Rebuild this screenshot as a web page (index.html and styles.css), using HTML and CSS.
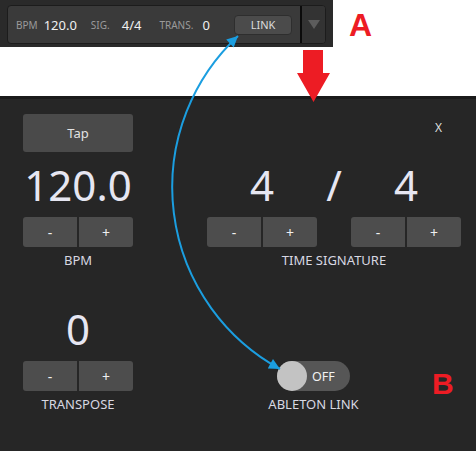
FILE: index.html
```html
<!DOCTYPE html>
<html lang="en">
<head>
    <meta charset="UTF-8">
    <meta name="viewport" content="width=device-width, initial-scale=1.0">
    <title>Ableton Link settings</title>
    <link rel="stylesheet" href="styles.css">
</head>
<body>
    <div class="top">
        <div class="transport">
            <div class="transport-inner">
                <div class="transport-main">
                    <span class="tb-label">BPM</span>
                    <span class="tb-value">120.0</span>
                    <span class="tb-label gap-sig">SIG.</span>
                    <span class="tb-value v-sig">4/4</span>
                    <span class="tb-label gap-trans">TRANS.</span>
                    <span class="tb-value v-trans">0</span>
                    <button class="link-btn">LINK</button>
                </div>
                <div class="transport-drop"><span class="drop-tri"></span></div>
            </div>
        </div>

        <span class="callout callout-a">A</span>

        <svg class="down-arrow" width="33" height="52" viewBox="0 0 33 52">
            <polygon points="6,0 26,0 26,23 33,23 16.5,52 0,23 6,23" fill="#ed1c24"/>
        </svg>
    </div>

    <section class="panel">
        <div class="row row-top">
            <button class="tap">Tap</button>
            <div class="close">X</div>
        </div>

        <div class="row">
            <div class="control">
                <div class="value">120.0</div>
                <div class="steppers">
                    <button>-</button>
                    <button>+</button>
                </div>
                <div class="label">BPM</div>
            </div>

            <div class="timesig">
                <div class="sig-values">
                    <div class="sig-part">
                        <div class="value">4</div>
                        <div class="steppers">
                            <button>-</button>
                            <button>+</button>
                        </div>
                    </div>
                    <div class="value sig-slash">/</div>
                    <div class="sig-part">
                        <div class="value">4</div>
                        <div class="steppers">
                            <button>-</button>
                            <button>+</button>
                        </div>
                    </div>
                </div>
                <div class="label">TIME SIGNATURE</div>
            </div>
        </div>

        <div class="row row-bottom">
            <div class="control">
                <div class="value">0</div>
                <div class="steppers">
                    <button>-</button>
                    <button>+</button>
                </div>
                <div class="label">TRANSPOSE</div>
            </div>

            <div class="link-control">
                <div class="toggle">
                    <span class="knob"></span>
                    <span class="toggle-text">OFF</span>
                </div>
                <div class="label">ABLETON LINK</div>
            </div>
        </div>

        <span class="callout callout-b">B</span>
    </section>

    <!-- annotation: LINK button maps to the Ableton Link toggle -->
    <svg class="link-arrow" width="476" height="451" viewBox="0 0 476 451">
        <defs>
            <marker id="head" viewBox="0 0 10 10" refX="10" refY="5" markerUnits="userSpaceOnUse"
                    markerWidth="15" markerHeight="11" orient="auto-start-reverse">
                <path d="M0,0 L10,5 L0,10 z" fill="#1b9ee0"/>
            </marker>
        </defs>
        <path d="M 238 36 A 207 207 0 0 0 280 369" fill="none" stroke="#1b9ee0" stroke-width="2"
              marker-start="url(#head)" marker-end="url(#head)"/>
    </svg>
</body>
</html>
```

FILE: styles.css
```css
:root {
    --panel-bg: #262626;
    --button-bg: #4d4d4d;
    --value-color: #e6e6f2;
    --label-color: #d8d8e2;
    --callout-red: #ed1c24;
}

body {
    margin: 0;
    padding: 0;
    width: 476px;
    height: 451px;
    overflow: hidden;
    position: relative;
    background-color: white;
    font-family: 'Noto Sans', 'DejaVu Sans', sans-serif;
}

button {
    font-family: inherit;
    border: none;
    padding: 0;
    cursor: pointer;
}

/* top transport bar */

.top {
    height: 96px;
    position: relative;
}

.transport {
    width: 333px;
    height: 47px;
    box-sizing: border-box;
    padding: 5px 7px 3px 7px;
    background-color: #2a2a2a;
}

.transport-inner {
    display: flex;
    height: 39px;
    box-sizing: border-box;
    border: 1px solid #1c1c1c;
    border-radius: 4px;
    background-color: #3a3a3a;
    overflow: hidden;
}

.transport-main {
    flex: 1;
    display: flex;
    align-items: center;
    padding-left: 8px;
    padding-right: 8px;
}

.tb-label {
    font-size: 10px;
    color: #9a9a9a;
}

.tb-value {
    font-size: 13px;
    color: #f0f0f0;
    margin-left: 6px;
}

.gap-sig {
    margin-left: 14px;
}

.v-sig {
    margin-left: 12px;
}

.gap-trans {
    margin-left: 18px;
}

.v-trans {
    margin-left: 9px;
}

.link-btn {
    margin-left: auto;
    width: 58px;
    height: 20px;
    border-radius: 4px;
    border: 1px solid #2e2e2e;
    background-color: #4b4b4b;
    color: #dcdcdc;
    font-size: 11px;
}

.transport-drop {
    width: 23px;
    border-left: 2px solid #0b0b0b;
    background-color: #333333;
    display: flex;
    align-items: center;
    justify-content: center;
}

.drop-tri {
    width: 0;
    height: 0;
    border-left: 6.5px solid transparent;
    border-right: 6.5px solid transparent;
    border-top: 9px solid #5c5c5c;
}

.callout {
    position: absolute;
    font-family: 'Liberation Sans', Arial, sans-serif;
    font-weight: bold;
    color: var(--callout-red);
    line-height: 1;
}

.callout-a {
    left: 349px;
    top: 9px;
    font-size: 32px;
}

.callout-b {
    left: 432px;
    top: 270px;
    font-size: 30px;
}

.down-arrow {
    position: absolute;
    left: 297px;
    top: 50px;
    z-index: 2;
}

/* settings panel */

.panel {
    position: relative;
    height: 355px;
    box-sizing: border-box;
    border-top: 3px solid #1a1a1a;
    background-color: var(--panel-bg);
    padding: 15px 15px 0 23px;
}

.row {
    display: flex;
    gap: 74px;
}

.row-bottom {
    margin-top: 28px;
}

.tap {
    width: 110px;
    height: 38px;
    border-radius: 3px;
    background-color: #4a4a4a;
    color: #e2e2e2;
    font-size: 13px;
}

.close {
    flex: 1;
    text-align: right;
    padding-right: 19px;
    margin-top: 7px;
    font-size: 12px;
    line-height: 14px;
    color: #dddddd;
}

.control {
    width: 110px;
    text-align: center;
}

.value {
    font-size: 42px;
    line-height: 42px;
    margin: 12px 0 11px;
    color: var(--value-color);
    text-align: center;
}

.steppers {
    display: flex;
    gap: 2px;
    height: 30px;
}

.steppers button {
    flex: 1;
    background-color: var(--button-bg);
    color: #f0f0f0;
    font-size: 14px;
}

.steppers button:first-child {
    border-radius: 3px 0 0 3px;
}

.steppers button:last-child {
    border-radius: 0 3px 3px 0;
}

.label {
    margin-top: 5px;
    font-size: 13px;
    line-height: 16px;
    color: var(--label-color);
    text-align: center;
}

.timesig {
    width: 254px;
}

.sig-values {
    display: flex;
}

.sig-part {
    width: 110px;
}

.sig-slash {
    width: 34px;
}

.link-control {
    align-self: flex-end;
    width: 213px;
    display: flex;
    flex-direction: column;
    align-items: center;
}

.toggle {
    display: flex;
    align-items: center;
    width: 73px;
    height: 30px;
    border-radius: 15px;
    background-color: #565656;
}

.knob {
    width: 30px;
    height: 30px;
    border-radius: 50%;
    background-color: #c3c3c3;
}

.toggle-text {
    margin-left: 5px;
    font-size: 12.5px;
    color: #f2f2f2;
}

.link-arrow {
    position: absolute;
    left: 0;
    top: 0;
    pointer-events: none;
    z-index: 3;
}
```
